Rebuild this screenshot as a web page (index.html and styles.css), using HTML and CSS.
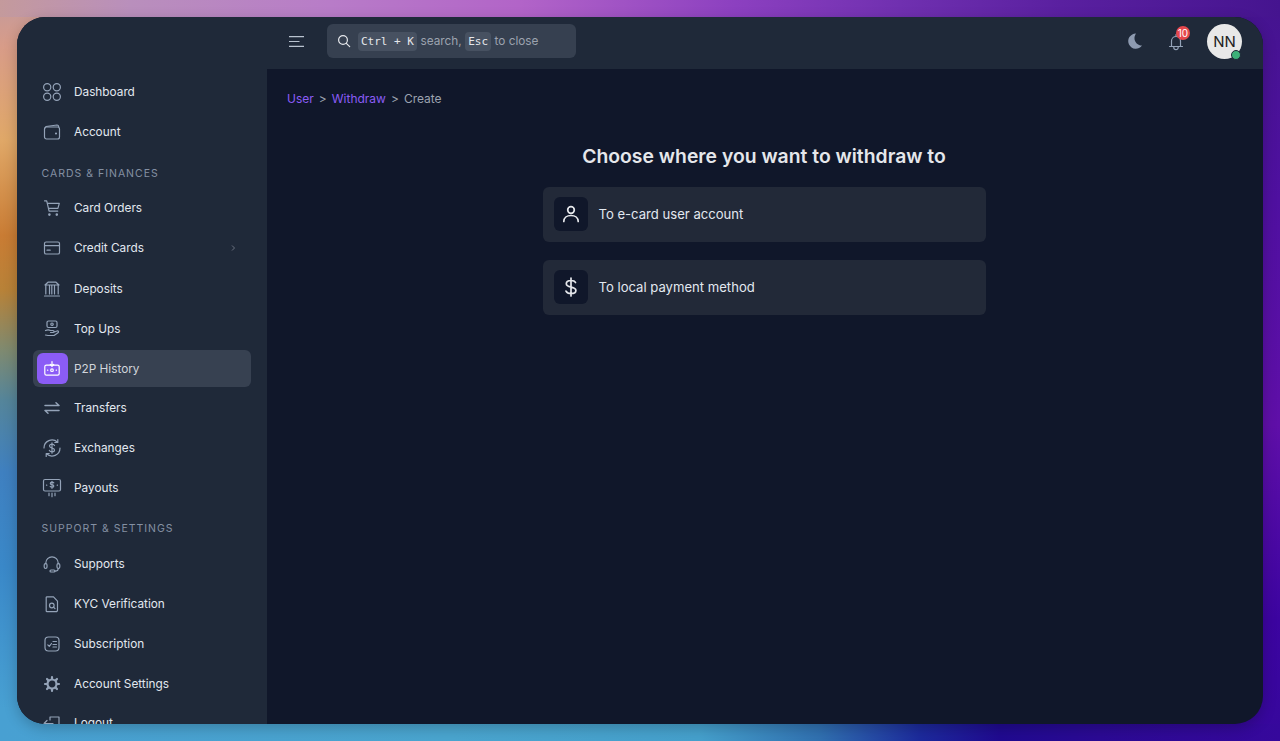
FILE: index.html
```html
<!DOCTYPE html>
<html lang="en">
<head>
<meta charset="utf-8">
<title>Withdraw</title>
<link rel="stylesheet" href="styles.css">
</head>
<body>
<div class="window">
  <aside class="sidebar">
    <nav class="nav">
      <a class="item"><span class="ico"><svg viewBox="0 0 20 20"><circle cx="5.200" cy="5.200" r="3.600"/><circle cx="14.800" cy="5.200" r="3.600"/><circle cx="5.200" cy="14.800" r="3.600"/><circle cx="14.800" cy="14.800" r="3.600"/></svg></span>Dashboard</a>
      <a class="item"><span class="ico"><svg viewBox="0 0 20 20"><rect x="2.500" y="5" width="15" height="12" rx="2"/><path d="M3 6 4 4.500 15 3c1.200 0 1.700.6 1.700 2"/><circle cx="14" cy="11.500" r=".5"/></svg></span>Account</a>
      <div class="label">CARDS &amp; FINANCES</div>
      <a class="item"><span class="ico"><svg viewBox="0 0 20 20"><path d="M2.500 2.800h2.200l2.400 10.400h8.600M5.300 5.300h12l-1.400 5H6.400"/><circle cx="7.400" cy="16.600" r=".7"/><circle cx="14.800" cy="16.600" r=".7"/></svg></span>Card Orders</a>
      <a class="item tall"><span class="ico"><svg viewBox="0 0 20 20"><rect x="2.500" y="4" width="15" height="12" rx="1.600"/><path d="M2.500 7.600h15M5 12.200h3.200"/></svg></span>Credit Cards<svg class="chev" viewBox="0 0 8 8"><path d="M3 1.500 5.500 4 3 6.500"/></svg></a>
      <a class="item"><span class="ico"><svg viewBox="0 0 20 20"><path d="M2.500 17h15M3.800 15V6M16.200 15V6M7.500 15V6M9.800 15V6M12.500 15V6M3 6l3-2.800h8L17 6z"/></svg></span>Deposits</a>
      <a class="item"><span class="ico"><svg viewBox="0 0 20 20"><rect x="5" y="2" width="10" height="6.500" rx="1.500"/><circle cx="10" cy="5.200" r="1.200"/><path d="M3.500 11.500c2-1 3.500-.8 5 0h2.500c1.500 0 1.500 2 0 2H8.500M11 13.500l4-1.500c1.500-.5 2 1 1 1.700l-4 2.800H6l-2.500-.5"/></svg></span>Top Ups</a>
      <a class="item active"><span class="ico"><svg viewBox="0 0 20 20"><rect x="2.800" y="6.200" width="14.400" height="10" rx="1.600"/><circle cx="10" cy="11.200" r="1.300"/><path d="M10 2.500v4.800M8.300 5.500 10 7.300l1.700-1.800M5.500 11.200h.3M14.200 11.200h.3"/></svg></span>P2P History</a>
      <a class="item"><span class="ico"><svg viewBox="0 0 20 20"><path class="mid" d="M3 7.500h14L14 4.800M17 12.500H3L6 15.200"/></svg></span>Transfers</a>
      <a class="item"><span class="ico"><svg viewBox="0 0 20 20"><path d="M2 10a8 8 0 0 1 13.500-5.800M18 10a8 8 0 0 1-13.500 5.800M15.800 1.500v3h-3M4.200 18.500v-3h3M12.500 7.500c-.5-1-1.400-1.300-2.500-1.300-1.400 0-2.500.7-2.500 1.900 0 2.800 5 1.200 5 3.800 0 1.200-1.100 1.900-2.500 1.900-1.200 0-2.100-.4-2.600-1.400M10 4.800v10.400"/></svg></span>Exchanges</a>
      <a class="item"><span class="ico"><svg viewBox="0 0 20 20"><rect x="1.500" y="1.500" width="17" height="11.500" rx="1.500"/><path d="M11.800 4.900c-.4-.5-1-.8-1.800-.8-1 0-1.700.5-1.700 1.300 0 1.800 3.500.8 3.500 2.500 0 .8-.8 1.300-1.800 1.300-.8 0-1.400-.3-1.800-.8M10 3.300v7M4.500 7.200h.3M15.200 7.200h.3M7 15.200v2.500M10 15.200v3.500M13 15.200v2.500"/></svg></span>Payouts</a>
      <div class="label second">SUPPORT &amp; SETTINGS</div>
      <a class="item"><span class="ico"><svg viewBox="0 0 20 20"><path d="M3.800 10V9a6.200 6.200 0 0 1 12.400 0v1"/><rect x="2.200" y="9.500" width="2.800" height="5" rx="1.400"/><rect x="15" y="9.500" width="2.800" height="5" rx="1.400"/><path d="M16.200 14.500c0 1.800-1.500 2.600-3.400 2.600"/><rect x="8" y="16" width="5" height="2" rx="1"/></svg></span>Supports</a>
      <a class="item"><span class="ico"><svg viewBox="0 0 20 20"><path d="M5 2.800h6.500l4 4.400v9a1.500 1.500 0 0 1-1.500 1.500H5a1 1 0 0 1-.8-.7V3.500a.7.7 0 0 1 .8-.7z"/><circle cx="9.800" cy="11.500" r="2.300"/><path d="M11.500 13.200 13 14.700"/></svg></span>KYC Verification</a>
      <a class="item"><span class="ico"><svg viewBox="0 0 20 20"><rect x="3" y="3" width="14" height="14" rx="3.500"/><path d="M5.800 10.800 7.300 12.300 9.500 9.500M11 7.500h3.500M11 10.500h3.500M11 13h3.500"/></svg></span>Subscription</a>
      <a class="item"><span class="ico"><svg viewBox="0 0 20 20"><circle cx="10" cy="10" r="4.500" class="thick"/><path class="thick" d="M10 3v1.500M10 15.500V17M3 10h1.500M15.500 10H17M5 5l1.100 1.100M13.900 13.900 15 15M5 15l1.100-1.100M13.900 6.100 15 5"/></svg></span>Account Settings</a>
      <a class="item"><span class="ico"><svg viewBox="0 0 20 20"><path d="M8 7V4h9v13H8v-3M2 10.500h9M5 7.500l-3 3 3 3"/></svg></span>Logout</a>
    </nav>
  </aside>
  <div class="main">
    <header class="topbar">
      <div class="left">
        <svg class="burger" viewBox="0 0 15 11"><path d="M0 .6h15M0 5.500h10.500M0 10.400h15"/></svg>
        <div class="search">
          <svg class="lens" viewBox="0 0 14 14"><circle cx="6" cy="6" r="4.400"/><path d="m9.300 9.300 3.400 3.400"/></svg>
          <kbd>Ctrl + K</kbd><span>search,</span><kbd>Esc</kbd><span>to close</span>
        </div>
      </div>
      <div class="right">
        <svg class="moon" viewBox="0 0 16 16"><path d="M9 .5A7.600 7.600 0 1 0 15 12.500C9.500 12.500 5 6.500 9 .5z"/></svg>
        <div class="bell">
          <svg viewBox="0 0 20 20"><path d="M3.500 15.500h13M5.500 15.500V10a4.500 4.500 0 0 1 9 0v5.500M10 3.500v2M7.800 15.500v1a2.200 2.200 0 0 0 4.400 0v-1"/></svg>
          <span class="badge">10</span>
        </div>
        <div class="avatar">NN<span class="dot"></span></div>
      </div>
    </header>
    <main class="content">
      <div class="crumbs"><a>User</a><span>&gt;</span><a>Withdraw</a><span>&gt;</span><b>Create</b></div>
      <section class="choose">
        <h1>Choose where you want to withdraw to</h1>
        <a class="card"><span class="box"><svg viewBox="0 0 20 20"><circle cx="10" cy="6" r="3.300"/><path d="M2.800 17.500c0-3.600 3-6 7.200-6s7.200 2.400 7.200 6"/></svg></span>To e-card user account</a>
        <a class="card"><span class="box"><svg viewBox="0 0 20 20"><path d="M10 1v18M14.500 5.500C13.800 4 12.200 3.500 10 3.500c-2.800 0-4.700 1.300-4.700 3.200 0 4.600 9.600 2.100 9.600 6.700 0 1.900-2 3.100-4.900 3.100-2.400 0-4.200-.7-5-2.400"/></svg></span>To local payment method</a>
      </section>
    </main>
  </div>
</div>
</body>
</html>
```
FILE: styles.css
```css
* { box-sizing: border-box; }
html, body { height: 100%; }
body {
  margin: 0;
  padding: 17px;
  overflow: hidden;
  font-family: Inter, "Liberation Sans", sans-serif;
  background-color: #5f0fa8;
  background-repeat: no-repeat;
  background-image:
    linear-gradient(90deg, #c49a9c 0, #b98fbc 130px, #b87cc8 330px, #b264c8 520px, #8c40c0 735px, #7030b0 900px, #5a20a0 1060px, #45148f 1280px),
    linear-gradient(90deg, #48a0d2 0, #4aa5cf 450px, #45a0cc 700px, #3070b0 820px, #1c2a9c 920px, #200a90 1000px, #2b0a94 1100px, #36089c 1280px),
    linear-gradient(180deg, #c49a9c 0, #d89c88 47px, #e0a868 140px, #c97c34 236px, #b88238 290px, #7f8a70 350px, #55859a 400px, #3f80c0 472px, #3a88c8 567px, #48a0d2 708px, #48a0d2 741px),
    linear-gradient(180deg, #45148f 0, #4f10a0 200px, #5f0fa8 425px, #3c04a0 620px, #36089c 741px);
  background-size: 100% 17px, 100% 17px, 45px 100%, 45px 100%;
  background-position: 0 0, 0 100%, 0 0, 100% 0;
}
.window {
  display: flex;
  height: 707px;
  border-radius: 28px;
  overflow: hidden;
  background: #10172a;
  box-shadow: 0 4px 14px rgba(0,0,0,.22);
}
.sidebar { flex: 0 0 250px; background: #1f2939; overflow: hidden; padding: 56px 16px 0; }
.nav { display: flex; flex-direction: column; gap: 2px; }
.item {
  display: flex;
  align-items: center;
  flex: none;
  height: 37.800px;
  padding-left: 3.500px;
  border-radius: 6px;
  font-size: 11.800px;
  color: #e2e8f0;
  gap: 6.500px;
}
.item.tall { margin-bottom: 1.500px; }
.item.active { background: #374151; color: #d1d5db; }
.ico { flex: 0 0 31px; height: 31px; display: flex; align-items: center; justify-content: center; border-radius: 6px; }
.ico svg { width: 20px; height: 20px; fill: none; stroke: #94a3b8; stroke-width: 1.200; stroke-linecap: round; stroke-linejoin: round; }
.ico .thick { stroke-width: 2.200; }
.ico .mid { stroke-width: 1.500; }
.active .ico { background: #8b5cf6; }
.active .ico svg { stroke: #fff; }
.chev { width: 8px; height: 8px; margin-left: auto; margin-right: 14px; fill: none; stroke: #6b7280; stroke-width: 1; }
.label { font-size: 10.500px; letter-spacing: 1px; color: #8490a3; padding-left: 8.500px; height: 14px; line-height: 14px; margin: 14px 0 6.400px; }
.label.second { margin: 13.500px 0 7px; }
.main { flex: 1; min-width: 0; display: flex; flex-direction: column; }
.topbar { height: 52px; flex: none; background: #1f2939; display: flex; align-items: center; justify-content: space-between; padding: 0 21px 4px 22px; }
.left { display: flex; align-items: center; gap: 23px; }
.burger { width: 15px; height: 11px; fill: none; stroke: #b8c2cf; stroke-width: 1.200; }
.search { width: 249px; height: 34px; border-radius: 6px; background: #364050; display: flex; align-items: center; padding-left: 10px; gap: 3.500px; font-size: 11.800px; color: #9ca3af; }
.lens { width: 14px; height: 14px; fill: none; stroke: #e5e7eb; stroke-width: 1.200; margin-right: 3.500px; stroke-linecap: round; }
kbd { font-family: "DejaVu Sans Mono", monospace; font-size: 11px; background: #475161; color: #e5e7eb; border-radius: 4px; height: 19px; line-height: 19px; padding: 0 3px; }
.right { display: flex; align-items: center; }
.moon { width: 16px; height: 16px; fill: #8d9ab0; margin-right: 23px; }
.bell { position: relative; width: 20px; height: 20px; margin-right: 21px; }
.bell svg { width: 20px; height: 20px; fill: none; stroke: #94a3b8; stroke-width: 1.200; stroke-linecap: round; stroke-linejoin: round; }
.badge { position: absolute; left: 10px; top: -5px; width: 14px; height: 14px; border-radius: 50%; background: #e5484d; color: #fff; font-size: 10px; line-height: 14px; text-align: center; }
.avatar { position: relative; width: 35px; height: 35px; border-radius: 50%; background: #e8e8e8; color: #222; font-size: 15px; display: flex; align-items: center; justify-content: center; }
.dot { position: absolute; right: 1px; bottom: -1px; width: 10px; height: 10px; border-radius: 50%; background: #3cb179; border: 1.500px solid #1f2939; }
.content { flex: 1; padding: 21px 22px 0 20px; }
.crumbs { display: flex; gap: 5px; font-size: 12px; line-height: 18px; color: #9ca3af; }
.crumbs a { color: #8b5cf6; }
.crumbs b { font-weight: 400; }
.choose { display: flex; flex-direction: column; align-items: center; margin-top: 34px; gap: 18px; }
h1 { margin: 0 0 -1px; font-size: 19.350px; line-height: 28px; font-weight: 600; color: #e5e7eb; }
.card { width: 443px; height: 55px; border-radius: 6px; background: #222938; display: flex; align-items: center; padding: 0 0 2px 11px; gap: 11px; font-size: 13.100px; color: #e2e8f0; }
.box { width: 34px; height: 34px; border-radius: 6px; background: #10172a; display: flex; align-items: center; justify-content: center; }
.box svg { width: 20px; height: 20px; fill: none; stroke: #e5e7eb; stroke-width: 1.700; stroke-linecap: round; }
```
